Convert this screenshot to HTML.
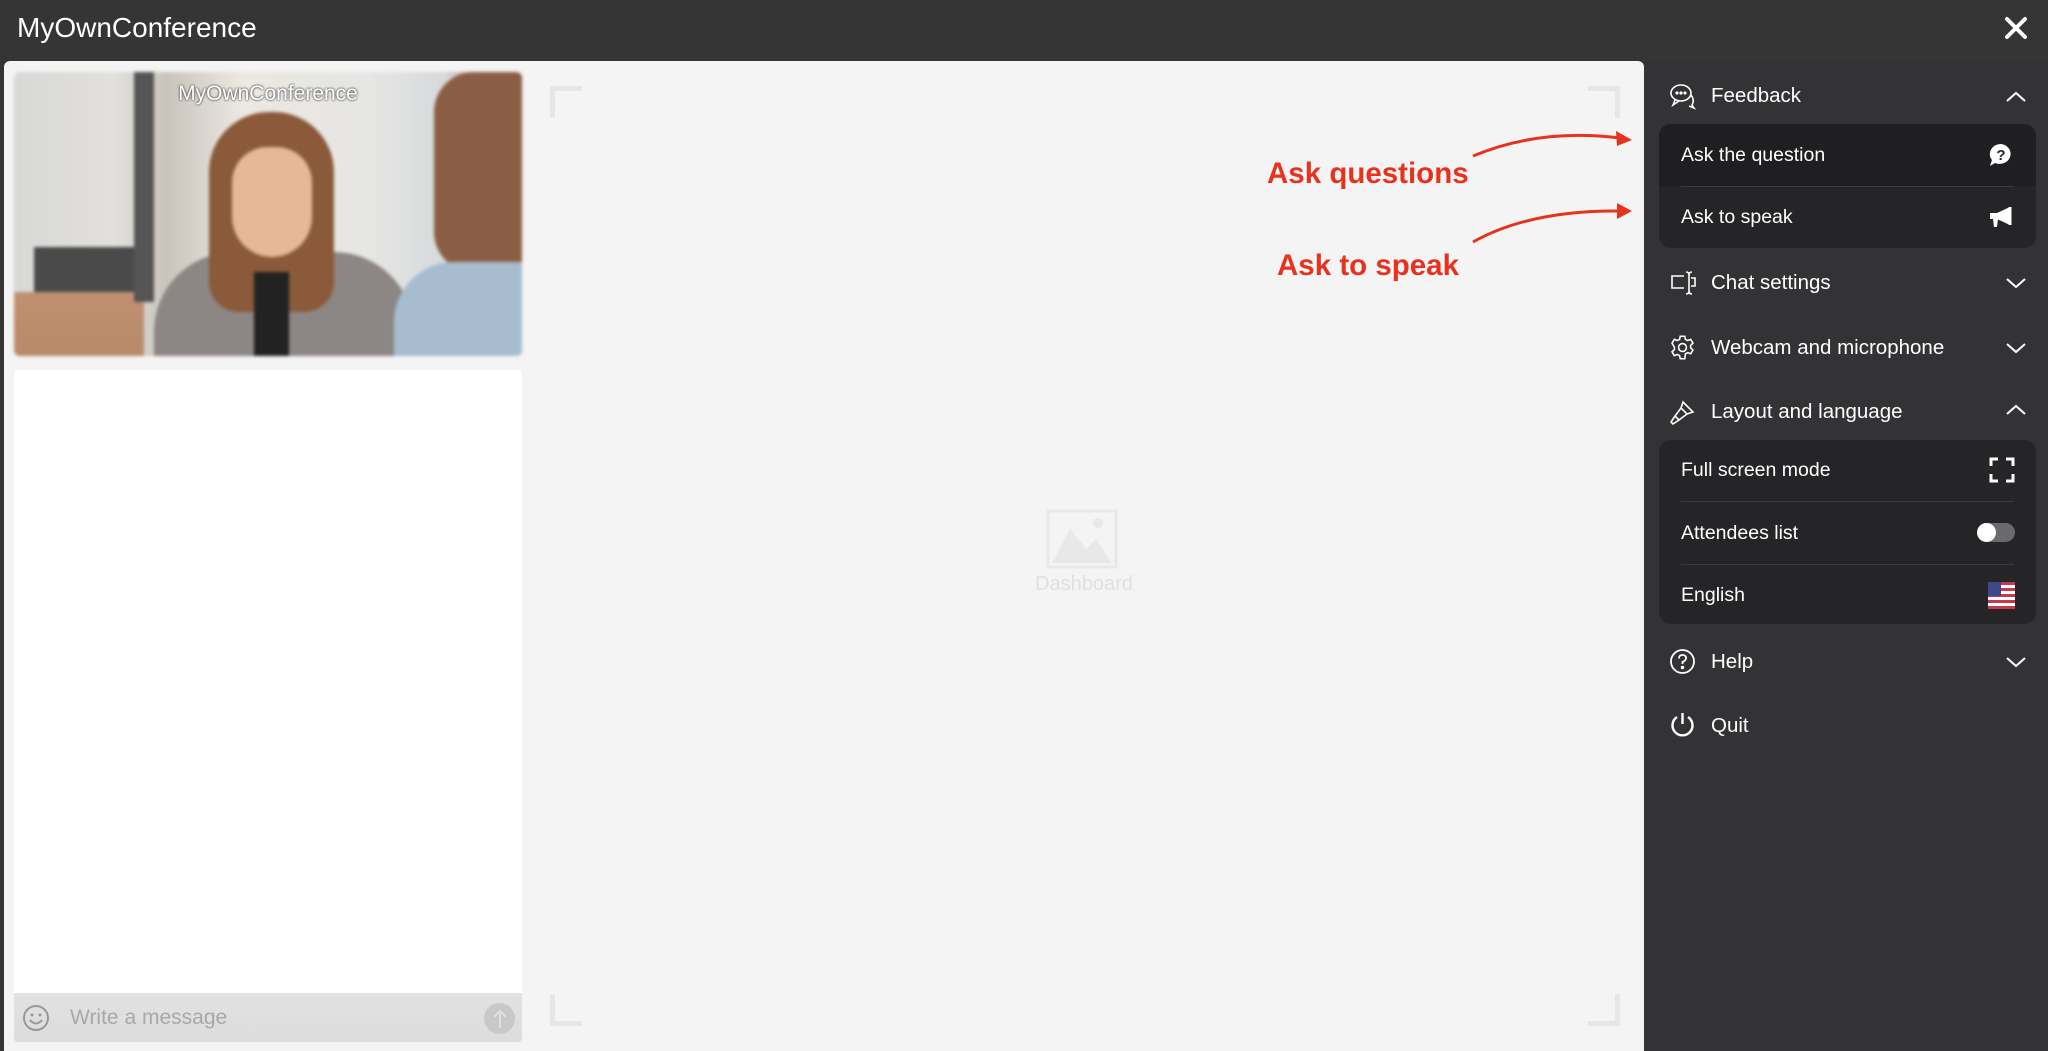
<!DOCTYPE html>
<html><head><meta charset="utf-8"><style>
*{box-sizing:border-box;margin:0;padding:0}
body{width:2048px;height:1051px;overflow:hidden;background:#353535;font-family:"Liberation Sans",sans-serif;position:relative}
.abs{position:absolute}
.title{left:17px;top:12px;color:#fff;font-size:28px}
.main{left:4px;top:61px;width:1640px;height:990px;background:#f4f4f4;border-radius:6px 6px 0 0}
.video{left:14px;top:72px;width:508px;height:284px;border-radius:6px;overflow:hidden;background:linear-gradient(90deg,#d8d8d6 0%,#e2e0dc 20%,#c8c4bc 30%,#ece8e2 45%,#e6e6e4 70%,#d6d8da 85%,#b08a70 92%,#8a6a58 100%)}
.chat{left:14px;top:370px;width:508px;height:623px;background:#fff;border-radius:4px 4px 0 0}
.input{left:14px;top:993px;width:508px;height:49px;background:linear-gradient(#e2e2e2,#dcdcdc);border-radius:0 0 4px 4px}
.side{left:1645px;top:61px;width:403px;height:990px;background:#333335}
.row{position:absolute;left:1711px;color:#fff;font-size:20.5px}
.sub{position:absolute;left:1659px;width:377px;background:#252527;border-radius:12px}
.sl{position:absolute;left:1681px;color:#fff;font-size:19.5px}
.sep{position:absolute;left:1681px;width:333px;height:1px;background:#3a3a3c}
.red{position:absolute;color:#e8321e;font-weight:bold;font-size:29.5px}
.brk{position:absolute;width:32px;height:32px;border-color:#e6e6e6;border-style:solid;border-width:0}
</style></head><body>
<div class="abs title">MyOwnConference</div>
<svg class="abs" style="left:2004px;top:16px" width="24" height="24" viewBox="0 0 24 24"><path d="M3 3L21 21M21 3L3 21" stroke="#fff" stroke-width="4" stroke-linecap="round"/></svg>
<div class="abs main"></div>
<div class="abs video" style="filter:blur(1.5px)">
 <div class="abs" style="left:20px;top:175px;width:100px;height:50px;background:#4a4a4a"></div>
 <div class="abs" style="left:0;top:220px;width:130px;height:64px;background:linear-gradient(#c09070,#b88a6a)"></div>
 <div class="abs" style="left:120px;top:0;width:20px;height:230px;background:#555"></div>
 <div class="abs" style="left:140px;top:180px;width:260px;height:110px;background:#8c8684;border-radius:80px 80px 0 0"></div>
 <div class="abs" style="left:195px;top:40px;width:125px;height:200px;background:#8a5a3a;border-radius:60px 60px 30px 30px"></div>
 <div class="abs" style="left:218px;top:75px;width:80px;height:110px;background:#e6b896;border-radius:40px 40px 45px 45px"></div>
 <div class="abs" style="left:240px;top:200px;width:35px;height:84px;background:#222"></div>
 <div class="abs" style="left:420px;top:0;width:90px;height:200px;background:#8a5e44;border-radius:40px 0 0 40px"></div>
 <div class="abs" style="left:380px;top:190px;width:130px;height:100px;background:#a8bcd0;border-radius:60px 0 0 0"></div>
</div>
<div class="abs" style="left:14px;top:82px;width:508px;text-align:center;color:#fff;font-size:21px;text-shadow:0 0 2px #555,0 0 2px #555">MyOwnConference</div>
<div class="abs chat"></div>
<div class="abs input">
 <svg class="abs" style="left:8px;top:11px" width="28" height="28" viewBox="0 0 28 28"><circle cx="14" cy="14" r="12" fill="none" stroke="#999" stroke-width="2"/><circle cx="10" cy="11" r="1.5" fill="#999"/><circle cx="18" cy="11" r="1.5" fill="#999"/><path d="M8 16Q14 23 20 16" fill="none" stroke="#999" stroke-width="2"/></svg>
 <div class="abs" style="left:56px;top:13px;color:#a8a8a8;font-size:21px">Write a message</div>
 <div class="abs" style="left:470px;top:10px;width:31px;height:31px;border-radius:50%;background:#c8c8c8"></div>
 <svg class="abs" style="left:477px;top:15px" width="18" height="22" viewBox="0 0 18 22"><path d="M9 20V3M3 9L9 3L15 9" stroke="#e0e0e0" stroke-width="2" fill="none"/></svg>
</div>
<div class="brk" style="left:550px;top:86px;border-left-width:5px;border-top-width:5px"></div>
<div class="brk" style="left:1588px;top:86px;border-right-width:5px;border-top-width:5px"></div>
<div class="brk" style="left:550px;top:994px;border-left-width:5px;border-bottom-width:5px"></div>
<div class="brk" style="left:1588px;top:994px;border-right-width:5px;border-bottom-width:5px"></div>
<svg class="abs" style="left:1046px;top:509px" width="72" height="60" viewBox="0 0 72 60"><rect x="2" y="2" width="68" height="56" fill="none" stroke="#e8e8e8" stroke-width="3"/><path d="M6 54L24 20L40 40L50 30L66 54Z" fill="#e8e8e8"/><circle cx="52" cy="14" r="5" fill="#e8e8e8"/></svg>
<div class="abs" style="left:1000px;top:573px;width:168px;text-align:center;color:#e0e0e0;font-size:20px">Dashboard</div>
<div class="red" style="left:1267px;top:157px">Ask questions</div>
<div class="red" style="left:1277px;top:249px">Ask to speak</div>
<svg class="abs" style="left:1460px;top:120px" width="190" height="140" viewBox="0 0 190 140"><path d="M13 36Q80 8 160 18" fill="none" stroke="#e8321e" stroke-width="3"/><path d="M172 20L156 11L157 26Z" fill="#e8321e"/><path d="M13 122Q70 90 160 91" fill="none" stroke="#e8321e" stroke-width="3"/><path d="M172 91L157 83L157 99Z" fill="#e8321e"/></svg>
<div class="abs side"></div>
<svg class="abs" style="left:1669px;top:82px" width="28" height="28" viewBox="0 0 28 28" fill="none" stroke="#fff" stroke-width="1.6"><ellipse cx="12" cy="11" rx="10" ry="8"/><path d="M6 18L4 23L10 19"/><path d="M22 13Q26 18 23 23L25 26L20 24"/><circle cx="8" cy="11" r=".8" fill="#fff"/><circle cx="12" cy="11" r=".8" fill="#fff"/><circle cx="16" cy="11" r=".8" fill="#fff"/></svg>
<div class="row" style="top:84px">Feedback</div>
<svg class="abs" style="left:2005px;top:90px" width="22" height="14" viewBox="0 0 22 14"><path d="M2 11L11 3L20 11" fill="none" stroke="#fff" stroke-width="2"/></svg>
<div class="sub" style="top:124px;height:124px"><div class="abs" style="left:0;top:0;width:377px;height:62px;background:#1f1f21;border-radius:12px 12px 0 0"></div></div>
<div class="sl" style="top:144px">Ask the question</div>
<svg class="abs" style="left:1988px;top:142px" width="26" height="26" viewBox="0 0 26 26"><path d="M13 2A11 10 0 1 1 7 21L2 24L4 18A11 10 0 0 1 13 2Z" fill="#fff"/><text x="13" y="18" font-size="15" font-weight="bold" text-anchor="middle" fill="#252527" font-family="Liberation Sans">?</text></svg>
<div class="sep" style="top:186px"></div>
<div class="sl" style="top:206px">Ask to speak</div>
<svg class="abs" style="left:1988px;top:205px" width="28" height="24" viewBox="0 0 28 24"><path d="M2 8H9L22 2V20L9 14H2Z" fill="#fff"/><path d="M5 14H10L9 22H6Z" fill="#fff"/><path d="M22 2V20" stroke="#fff" stroke-width="3"/></svg>
<svg class="abs" style="left:1669px;top:270px" width="28" height="26" viewBox="0 0 28 26" fill="none" stroke="#fff" stroke-width="1.6"><path d="M15 6H3V18H15"/><path d="M17 2Q20 2 20 5V21Q20 24 17 24M23 2Q20 2 20 5M20 21Q20 24 23 24M22 8H26V16H22"/></svg>
<div class="row" style="top:271px">Chat settings</div>
<svg class="abs" style="left:2005px;top:276px" width="22" height="14" viewBox="0 0 22 14"><path d="M2 3L11 11L20 3" fill="none" stroke="#fff" stroke-width="2"/></svg>
<svg class="abs" style="left:1669px;top:334px" width="27" height="27" viewBox="0 0 24 24" fill="none" stroke="#fff" stroke-width="1.4"><circle cx="12" cy="12" r="3.5"/><path d="M10 2h4l.6 2.8 2 1 2.7-1 2 3.4-2.1 1.9v2.2l2.1 1.9-2 3.4-2.7-1-2 1L14 22h-4l-.6-2.8-2-1-2.7 1-2-3.4 2.1-1.9v-2.2L2.7 8.2l2-3.4 2.7 1 2-1z"/></svg>
<div class="row" style="top:336px">Webcam and microphone</div>
<svg class="abs" style="left:2005px;top:341px" width="22" height="14" viewBox="0 0 22 14"><path d="M2 3L11 11L20 3" fill="none" stroke="#fff" stroke-width="2"/></svg>
<svg class="abs" style="left:1669px;top:398px" width="28" height="28" viewBox="0 0 28 28" fill="none" stroke="#fff" stroke-width="1.6"><path d="M14 4L24 14L18 16L12 10Z"/><path d="M12 10L6 18L10 22L18 16"/><path d="M6 18L2 24L4 26L10 22"/></svg>
<div class="row" style="top:400px">Layout and language</div>
<svg class="abs" style="left:2005px;top:403px" width="22" height="14" viewBox="0 0 22 14"><path d="M2 11L11 3L20 11" fill="none" stroke="#fff" stroke-width="2"/></svg>
<div class="sub" style="top:440px;height:184px"></div>
<div class="sl" style="top:459px">Full screen mode</div>
<svg class="abs" style="left:1989px;top:457px" width="26" height="26" viewBox="0 0 26 26" fill="none" stroke="#fff" stroke-width="3"><path d="M2 9V2H9M17 2H24V9M24 17V24H17M9 24H2V17"/></svg>
<div class="sep" style="top:501px"></div>
<div class="sl" style="top:522px">Attendees list</div>
<div class="abs" style="left:1977px;top:523px;width:38px;height:19px;border-radius:10px;background:#6a6a6c"></div>
<div class="abs" style="left:1977px;top:523px;width:19px;height:19px;border-radius:50%;background:#fff"></div>
<div class="sep" style="top:564px"></div>
<div class="sl" style="top:584px">English</div>
<svg class="abs" style="left:1988px;top:582px" width="27" height="27" viewBox="0 0 27 27"><rect width="27" height="27" fill="#fff"/><g fill="#c8384a"><rect y="0" width="27" height="3"/><rect y="6" width="27" height="3"/><rect y="12" width="27" height="3"/><rect y="18" width="27" height="3"/><rect y="24" width="27" height="3"/></g><rect width="13" height="14" fill="#3c4a8c"/></svg>
<svg class="abs" style="left:1669px;top:648px" width="27" height="27" viewBox="0 0 27 27" fill="none" stroke="#fff" stroke-width="1.8"><circle cx="13.5" cy="13.5" r="11.5"/><path d="M10 10.5Q10 7 13.5 7Q17 7 17 10Q17 12.5 13.5 14V16"/><circle cx="13.5" cy="19.5" r=".8" fill="#fff"/></svg>
<div class="row" style="top:650px">Help</div>
<svg class="abs" style="left:2005px;top:655px" width="22" height="14" viewBox="0 0 22 14"><path d="M2 3L11 11L20 3" fill="none" stroke="#fff" stroke-width="2"/></svg>
<svg class="abs" style="left:1669px;top:711px" width="27" height="27" viewBox="0 0 27 27" fill="none" stroke="#fff" stroke-width="2.4"><path d="M8 6A10 10 0 1 0 19 6"/><path d="M13.5 2V13"/></svg>
<div class="row" style="top:714px">Quit</div>
</body></html>
